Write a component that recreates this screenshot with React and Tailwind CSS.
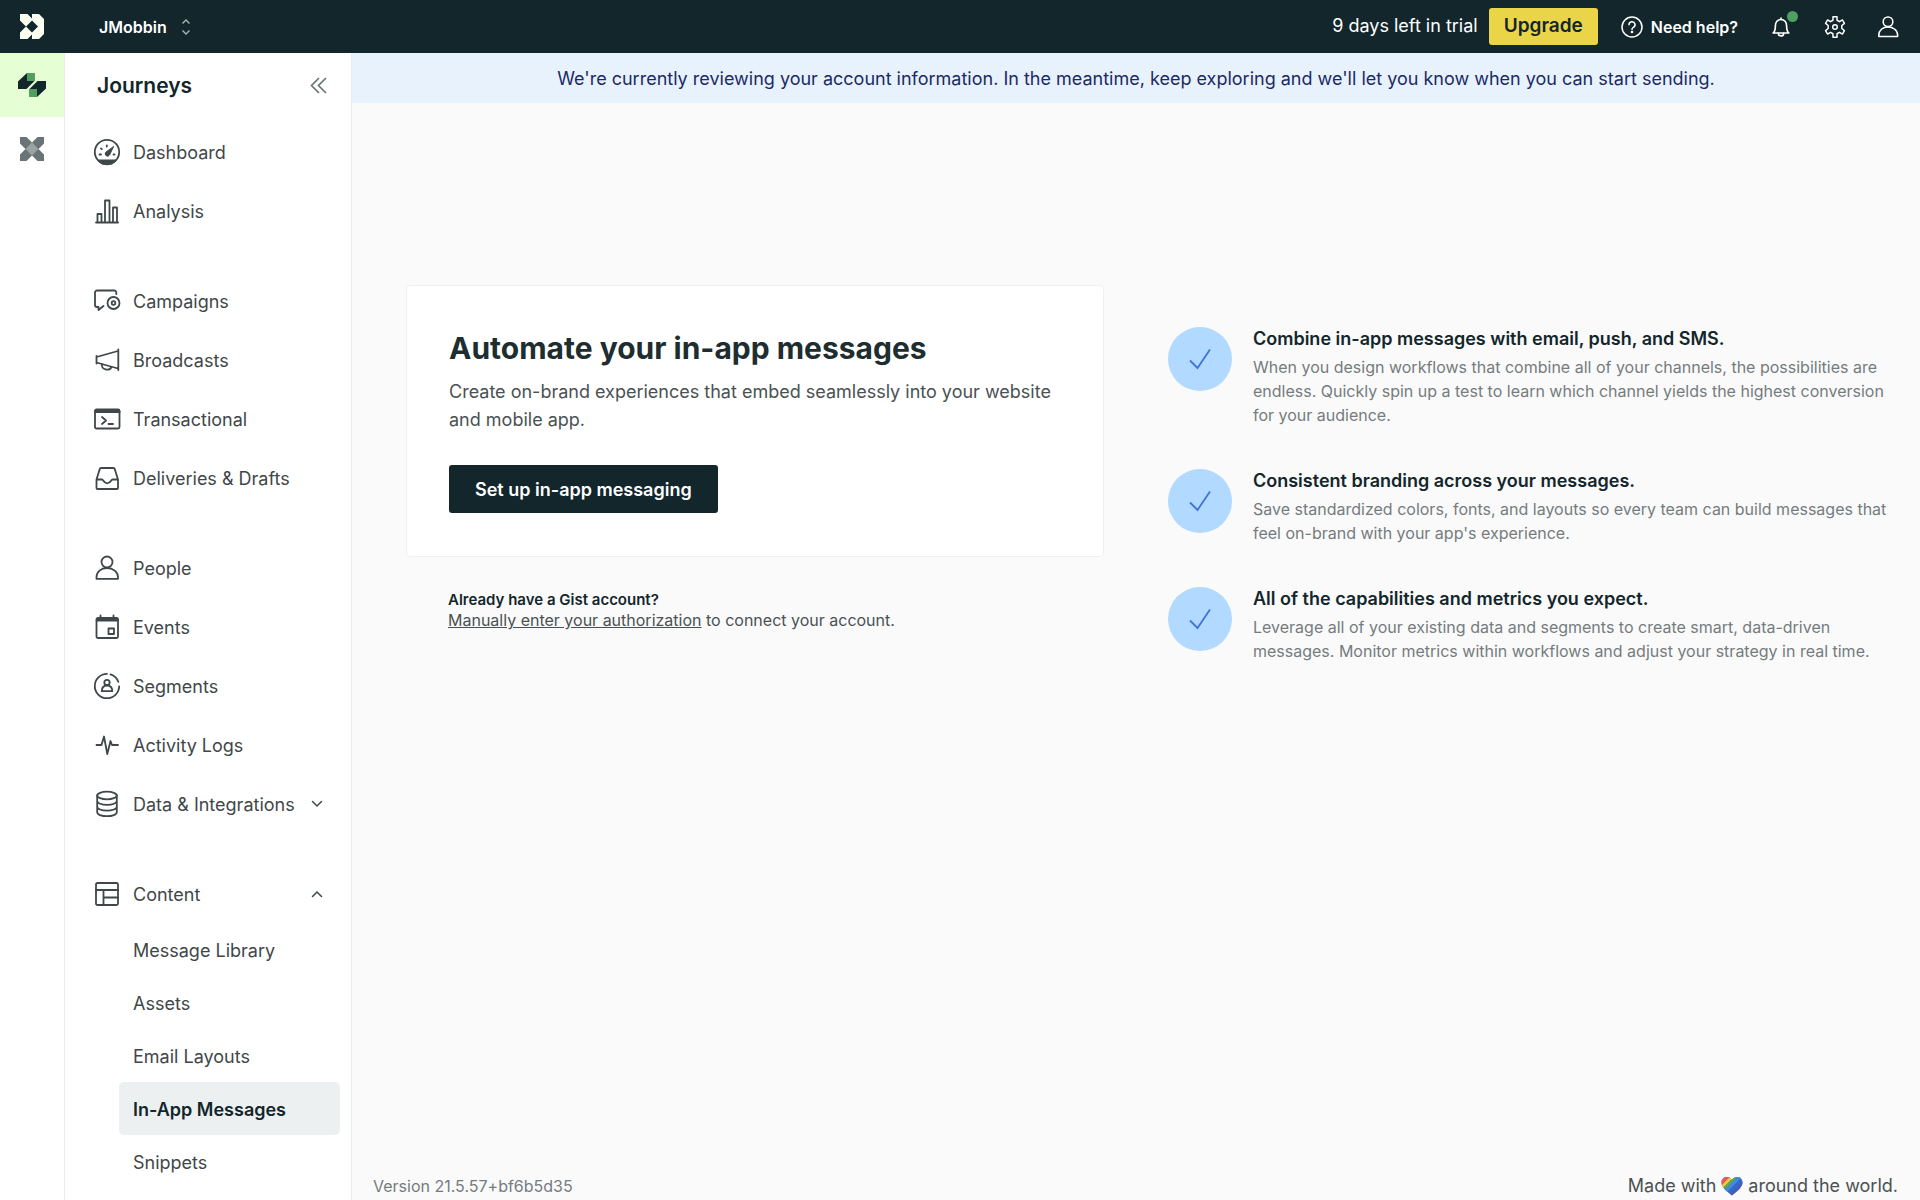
function Icon({ children, size = 32, className = "" }) {
  return (
    <svg
      width={size}
      height={size}
      viewBox="0 0 32 32"
      fill="none"
      stroke="currentColor"
      strokeWidth="1.8"
      strokeLinecap="round"
      strokeLinejoin="round"
      className={`shrink-0 ${className}`}
      aria-hidden="true"
    >
      {children}
    </svg>
  );
}

const icons = {
  dashboard: (
    <>
      <circle cx="16" cy="16" r="12.2" />
      <path d="M7.5 24.5h17l-4 3-4.500 .8-4.500-.8z" fill="currentColor" />
      <path d="M22.500 10.800l-4 8.200a2.300 2.300 0 1 1-3.700-2.700z" fill="currentColor" strokeWidth="1" />
      <path d="M8.500 18.500h1.500M10 12.500l.8.600M15.800 9.300v1.200M22.500 18.500h1" strokeWidth="1.800" />
    </>
  ),
  analysis: (
    <path d="M5 27.500h22M6.500 27v-8h4v8M14 27V5.500h4.500V27M22 27V12.500h4V27" />
  ),
  campaigns: (
    <>
      <path d="M25.300 9V7.500a2 2 0 0 0-2-2H6a2 2 0 0 0-2 2v12.500a2 2 0 0 0 2 2h1.500V25l5-4" />
      <circle cx="22.500" cy="18" r="6" />
      <circle cx="22.500" cy="18" r="1.800" />
    </>
  ),
  broadcasts: (
    <>
      <path d="M27.300 5.500v20.500M5.500 12v7.500M5.500 13l21.500-6M5.500 18.500l21.500 6" />
      <path d="M11 20.500a5 4.500 0 0 0 9.500 2.500" />
    </>
  ),
  transactional: (
    <>
      <rect x="4" y="6.500" width="24.500" height="19" rx="1.500" />
      <path d="M4.500 8.500h23.500" strokeWidth="3" />
      <path d="M11 14l4 3.500-4 3.500M17.500 21h4.500" />
    </>
  ),
  deliveries: (
    <path d="M5.500 17.500V26a1 1 0 0 0 1 1h19.500a1 1 0 0 0 1-1v-8.500L23.800 7.300a1.500 1.500 0 0 0-1.500-1.300H10.200a1.500 1.500 0 0 0-1.500 1.300zh5.500c1.500 0 1.500 3.800 5.200 3.800s3.800-3.800 5.300-3.800H27" />
  ),
  people: (
    <>
      <circle cx="16" cy="10" r="5.500" />
      <path d="M5.500 26.800v-1.500c0-5.500 4.500-9.300 10.500-9.300s11 3.800 11 9.300v1.500z" />
    </>
  ),
  events: (
    <>
      <rect x="5.500" y="7" width="21.500" height="20" rx="1.500" />
      <path d="M6.500 8.800h19.500" strokeWidth="3.500" />
      <path d="M9.500 4.500v3M22.500 4.500v3" />
      <rect x="17.500" y="17.500" width="5.500" height="5.500" />
    </>
  ),
  segments: (
    <>
      <path d="M16 3.800a12.200 12.200 0 1 0 12.200 12.500M19.500 4.300a12.200 12.200 0 0 1 7.800 7.500" />
      <circle cx="16" cy="12.500" r="2.700" />
      <path d="M10.800 21.200c0-3.700 2-5.700 5.200-5.700s5.300 2 5.300 5.700z" />
    </>
  ),
  activity: <path d="M5.500 16h5l2.500-8.500 3.300 17.500 3.200-13 1.500 4h6" />,
  data: (
    <>
      <ellipse cx="16" cy="7.500" rx="9.800" ry="3.800" />
      <path d="M6.200 7.500v16.800c0 2.200 4.400 3.900 9.800 3.900s9.800-1.700 9.800-3.900V7.500M6.200 13c0 2.200 4.400 3.900 9.800 3.900s9.800-1.700 9.800-3.900M6.200 18.700c0 2.200 4.400 3.900 9.800 3.900s9.800-1.700 9.800-3.900" />
    </>
  ),
  content: (
    <>
      <rect x="5" y="5" width="22" height="22" rx="1.500" />
      <path d="M5 12h22M12.500 12v15M12.500 19.500H27" />
    </>
  ),
};

const navGroups = [
  [
    { label: "Dashboard", icon: "dashboard" },
    { label: "Analysis", icon: "analysis" },
  ],
  [
    { label: "Campaigns", icon: "campaigns" },
    { label: "Broadcasts", icon: "broadcasts" },
    { label: "Transactional", icon: "transactional" },
    { label: "Deliveries & Drafts", icon: "deliveries" },
  ],
  [
    { label: "People", icon: "people" },
    { label: "Events", icon: "events" },
    { label: "Segments", icon: "segments" },
    { label: "Activity Logs", icon: "activity" },
    { label: "Data & Integrations", icon: "data", expanded: false },
  ],
  [{ label: "Content", icon: "content", expanded: true }],
];

const contentLinks = ["Message Library", "Assets", "Email Layouts", "In-App Messages", "Snippets"];

const features = [
  {
    title: "Combine in-app messages with email, push, and SMS.",
    text: "When you design workflows that combine all of your channels, the possibilities are endless. Quickly spin up a test to learn which channel yields the highest conversion for your audience.",
  },
  {
    title: "Consistent branding across your messages.",
    text: "Save standardized colors, fonts, and layouts so every team can build messages that feel on-brand with your app's experience.",
  },
  {
    title: "All of the capabilities and metrics you expect.",
    text: "Leverage all of your existing data and segments to create smart, data-driven messages. Monitor metrics within workflows and adjust your strategy in real time.",
  },
];

function Chevron({ up }) {
  return (
    <svg width="12" height="12" viewBox="0 0 12 12" fill="none" stroke="currentColor" strokeWidth="1.5" strokeLinecap="round" aria-hidden="true">
      <path d={up ? "M1.500 8.500L6 4l4.500 4.500" : "M1.500 3.500L6 8l4.500-4.500"} />
    </svg>
  );
}

function Header() {
  return (
    <header className="flex h-[53px] shrink-0 items-center bg-[#12262b] text-white">
      <a href="#home" aria-label="Home" className="flex w-16 shrink-0 justify-center">
        <svg width="24" height="25" viewBox="0 0 24 25" fill="#fbfff2" fillRule="evenodd">
          <path d="M0 0h7.500L12 4.500V0h7l5 5v15l-5 5h-7v-4.500L7.500 25H0v-6.500l6-6L0 6.500zM12 6.500l-6 6 6 6 6-6z" />
        </svg>
      </a>
      <button type="button" className="ml-[35px] flex items-center gap-[14px] text-[16px] font-semibold leading-6">
        JMobbin
        <svg width="10" height="16" viewBox="0 0 10 16" fill="none" stroke="#a9b5b5" strokeWidth="1.400" aria-hidden="true">
          <path d="M1.500 4.500L5 1l3.500 3.500M1.500 11.500L5 15l3.500-3.500" />
        </svg>
      </button>
      <div className="ml-auto flex items-center">
        <span className="pb-0.5 text-[18px] leading-6">9 days left in trial</span>
        <button type="button" className="ml-[11px] h-[37px] rounded-[3px] bg-[#ead548] px-[15px] text-[19px] font-semibold text-[#12262b]">
          Upgrade
        </button>
        <a href="#help" className="ml-[23px] flex items-center gap-2 text-[16px] font-semibold">
          <svg width="22" height="22" viewBox="0 0 22 22" fill="none" stroke="currentColor" strokeWidth="1.500" strokeLinecap="round" aria-hidden="true">
            <circle cx="11" cy="11" r="10" />
            <path d="M8 8.700a3 3 0 1 1 4.300 2.700c-.9.500-1.300 1-1.300 2" />
            <circle cx="11" cy="16" r=".6" fill="currentColor" />
          </svg>
          Need help?
        </a>
        <button type="button" aria-label="Notifications" className="relative ml-[31px]">
          <Icon size={24}>
            <path d="M5.500 24h21c-2.200-2-3-4-3-9.500 0-5-3-8.500-7.500-8.500s-7.500 3.500-7.500 8.500c0 5.500-.8 7.500-3 9.500z" strokeWidth="2.200" />
            <path d="M12.500 24.500c0 4.500 7 4.500 7 0M16 6V4" strokeWidth="2.200" />
          </Icon>
          <span className="absolute -right-[5px] -top-1 size-[11px] rounded-full bg-[#4f9f5f]" />
        </button>
        <button type="button" aria-label="Settings" className="ml-[29px]">
          <Icon size={26}>
            <path d="M13.500 3.500h5v4.200l3 1.700 3.600-2.100 2.500 4.300-3.200 2.500v3.800l3.200 2.500-2.500 4.300-3.600-2.100-3 1.700v4.200h-5v-4.200l-3-1.700-3.600 2.100-2.500-4.300 3.200-2.500v-3.800l-3.200-2.500 2.500-4.300 3.600 2.100 3-1.700z" />
            <circle cx="16" cy="16" r="2.800" />
          </Icon>
        </button>
        <button type="button" aria-label="Account" className="ml-[26px] mr-[18px]">
          <Icon size={28}>{icons.people}</Icon>
        </button>
      </div>
    </header>
  );
}

function ProductRail() {
  return (
    <nav aria-label="Products" className="w-[65px] shrink-0 border-r border-[#e9ecec] bg-white">
      <a href="#journeys" aria-label="Journeys" className="flex h-16 items-center justify-center bg-[#e5fed3]">
        <svg width="28" height="26" viewBox="0 0 28 26">
          <path d="M9 1h7.500v8L8.500 17H0V9.500z" fill="#12262b" />
          <path d="M19 25h-7.500v-8l8-8H28v7.500z" fill="#12262b" />
          <path d="M9 1h7.500v8H9zM11.500 17H19v8h-7.500z" fill="#4f9f5f" />
        </svg>
      </a>
      <a href="#pipelines" aria-label="Data Pipelines" className="flex h-16 items-center justify-center">
        <svg width="24" height="24" viewBox="0 0 24 24">
          <path d="M0 0h6.500L12 5.500 17.500 0H24v6.500L18.500 12l5.500 5.500V24h-6.500L12 18.500 6.500 24H0v-6.500L5.500 12 0 6.500z" fill="#6a7476" />
          <path d="M12 5.500l6.500 6.500-6.500 6.500L5.500 12z" fill="#9ba3a4" />
        </svg>
      </a>
    </nav>
  );
}

function NavItem({ item }) {
  const className = "flex h-[59px] w-full items-center gap-[10px] whitespace-nowrap text-left";
  const label = (
    <>
      <Icon>{icons[item.icon]}</Icon>
      <span className="pt-px">{item.label}</span>
    </>
  );
  if (item.expanded === undefined) {
    return <a href="#nav" className={className}>{label}</a>;
  }
  return (
    <button type="button" aria-expanded={item.expanded} className={className}>
      {label}
      <span className="ml-auto">
        <Chevron up={item.expanded} />
      </span>
    </button>
  );
}

function Sidebar() {
  return (
    <aside className="w-[287px] shrink-0 overflow-hidden border-r border-[#e9ecec] bg-white text-[18px] text-[#3f4749]">
      <div className="flex h-[69px] items-center justify-between pb-1 pl-8 pr-6">
        <h2 className="text-[21px] font-semibold text-[#12262b]">Journeys</h2>
        <button type="button" aria-label="Collapse sidebar">
          <svg width="17" height="17" viewBox="0 0 17 17" fill="none" stroke="#667072" strokeWidth="1.600" aria-hidden="true">
            <path d="M9 1L1.500 8.500 9 16M16 1L8.500 8.500 16 16" />
          </svg>
        </button>
      </div>
      <nav aria-label="Journeys" className="flex flex-col gap-[31px] pl-[26px]">
        {navGroups.map((group) => (
          <div key={group[0].label} className="pr-7">
            {group.map((item) => (
              <NavItem key={item.label} item={item} />
            ))}
          </div>
        ))}
      </nav>
      <div className="pl-[54px] pr-[11px]">
        {contentLinks.map((label) => (
          <a
            key={label}
            href="#content"
            className={`flex h-[53px] items-center rounded-[5px] pl-[14px] pt-0.5 ${
              label === "In-App Messages" ? "bg-[#edf0f1] font-semibold text-[#12262b]" : ""
            }`}
          >
            {label}
          </a>
        ))}
      </div>
    </aside>
  );
}

function SetupCard() {
  return (
    <div>
      <section className="rounded-[4px] border border-[#eff1f1] bg-white px-[42px] pb-[43px] pt-[42px]">
        <h1 className="text-[30px] font-bold leading-10 text-[#1d2d30]">Automate your in-app messages</h1>
        <p className="mt-[10px] text-[18px] leading-7 text-[#4a5153]">
          Create on-brand experiences that embed seamlessly into your website and mobile app.
        </p>
        <button type="button" className="mt-[31px] h-12 rounded-[3px] bg-[#12262b] px-[26px] text-[18px] font-semibold text-white">
          Set up in-app messaging
        </button>
      </section>
      <div className="mt-8 pl-[42px] text-[16px] leading-[21px] text-[#4a5153]">
        <h2 className="text-[15px] font-semibold text-[#12262b]">Already have a Gist account?</h2>
        <p>
          <a href="#authorize" className="underline">Manually enter your authorization</a> to connect your account.
        </p>
      </div>
    </div>
  );
}

function Feature({ title, text }) {
  return (
    <li className="flex items-start gap-[21px]">
      <span className="mt-0.5 flex size-16 shrink-0 items-center justify-center rounded-full bg-[#b2d9ff]">
        <svg width="22" height="22" viewBox="0 0 22 22" fill="none" stroke="#3f74d8" strokeWidth="1.800" aria-hidden="true">
          <path d="M1 12.500l7.500 7.500L21 1.500" />
        </svg>
      </span>
      <div>
        <h3 className="text-[18px] font-semibold leading-7 text-[#12262b]">{title}</h3>
        <p className="mt-0.5 text-[16px] leading-6 text-[#757c7e]">{text}</p>
      </div>
    </li>
  );
}

function Heart() {
  return (
    <svg width="22" height="20" viewBox="0 0 22 20" className="mx-[5px] inline-block" role="img" aria-label="love">
      <clipPath id="heart">
        <path d="M11 19.500C6 15.500.5 11.500.5 6.200.5 3 3 1 5.700 1 8 1 10 2.200 11 4.200 12 2.200 14 1 16.300 1 19 1 21.500 3 21.500 6.200c0 5.300-5.500 9.300-10.500 13.300z" />
      </clipPath>
      <g clipPath="url(#heart)" strokeWidth="4">
        <path d="M0 0h22v20H0z" fill="#3767c8" />
        <path d="M-4 10L10-4" stroke="#e2604c" strokeWidth="8" />
        <path d="M-4 16L16-4" stroke="#f0c93e" strokeWidth="3" />
        <path d="M-4 20L20-4" stroke="#5aa35b" strokeWidth="3" />
        <path d="M-4 24L24-4" stroke="#3f8be0" strokeWidth="3" />
        <path d="M2 27L29 0" stroke="#4b59b5" strokeWidth="2" />
      </g>
    </svg>
  );
}

export default function App() {
  return (
    <div className="flex h-screen flex-col overflow-hidden bg-[#fafafa] font-[Inter,sans-serif]">
      <Header />
      <div className="flex min-h-0 flex-1">
        <ProductRail />
        <Sidebar />
        <div className="flex min-w-0 flex-1 flex-col">
          <div role="status" className="flex h-[50px] shrink-0 items-center justify-center bg-[#e8f2fd] text-[18px] text-[#1b2a66]">
            We're currently reviewing your account information. In the meantime, keep exploring and we'll let you know when you can start sending.
          </div>
          <main className="grid flex-1 grid-cols-[698fr_732fr] items-start gap-16 pl-[54px] pr-5 pt-[182px]">
            <SetupCard />
            <ul className="flex flex-col gap-10 pt-10">
              {features.map((feature) => (
                <Feature key={feature.title} {...feature} />
              ))}
            </ul>
          </main>
          <footer className="flex shrink-0 items-center justify-between pb-0.5 pl-[21px] pr-[22px] text-[#4a5153]">
            <span className="text-[16px] text-[#757c7e]">Version 21.5.57+bf6b5d35</span>
            <span className="flex items-center text-[18px] leading-6">
              Made with <Heart /> around the world.
            </span>
          </footer>
        </div>
      </div>
    </div>
  );
}
